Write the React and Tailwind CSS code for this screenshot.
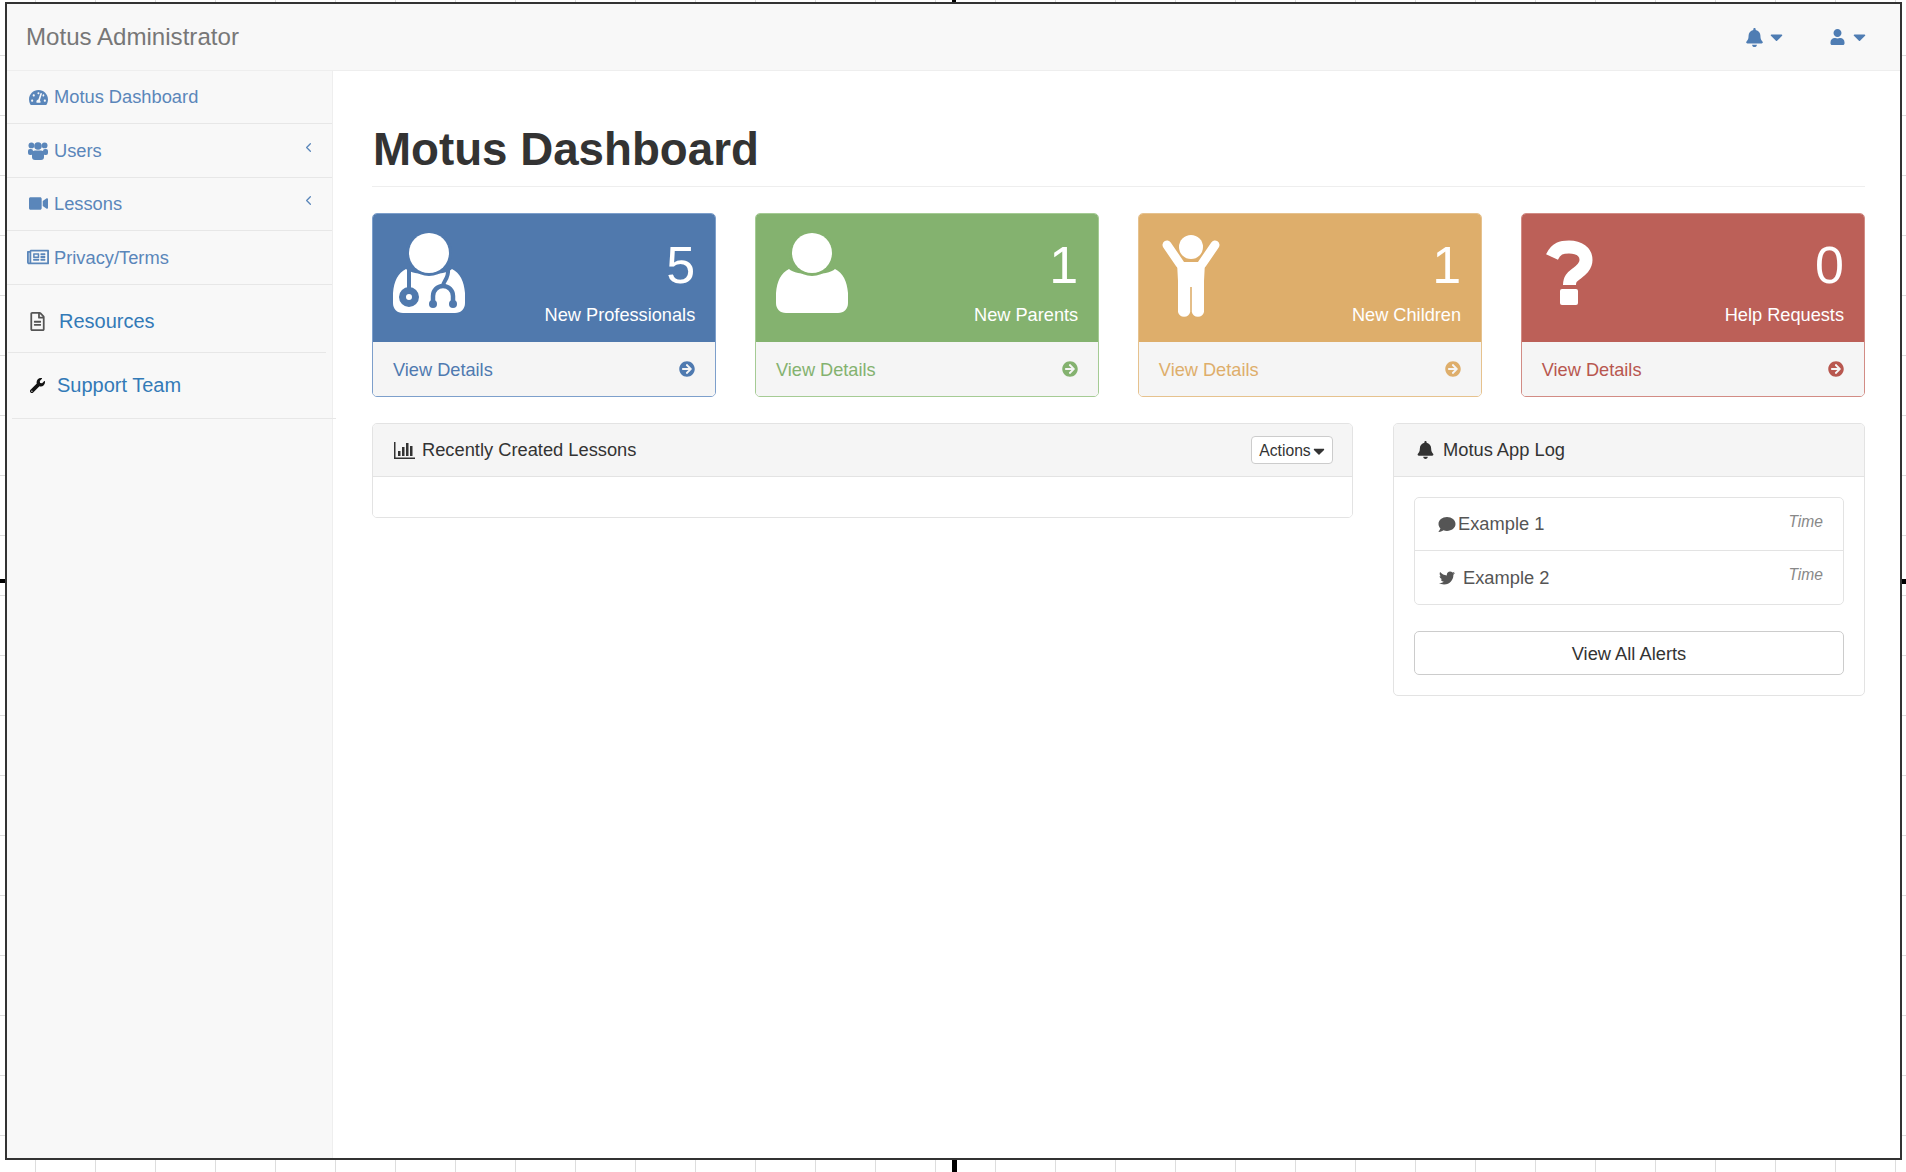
import React from "react";
import { ChevronLeft } from "lucide-react";
import {
  FaTachometerAlt,
  FaVideo,
  FaRegNewspaper,
  FaRegFileAlt,
  FaWrench,
  FaBell,
  FaUser,
  FaCaretDown,
  FaArrowCircleRight,
  FaComment,
  FaTwitter,
} from "react-icons/fa";

const BodyShape = () => (
  <path d="M13 36 C5 40 1 48 0 60 L0 70 C0 76 4 80 10 80 L62 80 C68 80 72 76 72 70 L72 60 C71 48 67 40 59 36 C52 43 20 43 13 36 Z" fill="white" />
);

const DoctorIcon = () => (
  <svg width="72" height="80" viewBox="0 0 72 80">
    <BodyShape />
    <circle cx="36" cy="20" r="23" fill="#5079ad" />
    <circle cx="36" cy="20" r="20" fill="white" />
    <path d="M16 36 L16 56" stroke="#5079ad" strokeWidth="4" fill="none" />
    <circle cx="16" cy="64" r="6.5" fill="white" stroke="#5079ad" strokeWidth="7" />
    <path d="M55 36 C56 46 50 48 50 53" stroke="#5079ad" strokeWidth="4" fill="none" />
    <path d="M40 70 L40 63 A10 10 0 0 1 60 63 L60 70" stroke="#5079ad" strokeWidth="4.5" fill="none" />
    <circle cx="40" cy="71" r="4" fill="#5079ad" />
    <circle cx="60" cy="71" r="4" fill="#5079ad" />
  </svg>
);

const ParentIcon = () => (
  <svg width="72" height="80" viewBox="0 0 72 80">
    <BodyShape />
    <circle cx="36" cy="20" r="23" fill="#84b26f" />
    <ellipse cx="36" cy="20" rx="20" ry="20" fill="white" />
  </svg>
);

const ChildIcon = () => (
  <svg width="58" height="84" viewBox="0 0 58 84">
    <circle cx="29" cy="12" r="12" fill="white" />
    <path d="M5 10 L18 29 M53 10 L40 29" stroke="white" strokeWidth="9" strokeLinecap="round" fill="none" />
    <path d="M15 27 L43 27 L42 46 L42 77 A6.3 6.3 0 0 1 29.8 77 L29.8 52 L28.2 52 L28.2 77 A6.3 6.3 0 0 1 16 77 L16 46 Z" fill="white" />
  </svg>
);

const QuestionIcon = () => (
  <svg width="47" height="65" viewBox="0 0 47 65">
    <path d="M6 17 C10 8 16 7 23 7 C33 7 40 12 40 20 C40 27 34 31 30 34 C26 37 23.5 39 23.5 45" stroke="white" strokeWidth="13" fill="none" />
    <rect x="14" y="49" width="18" height="16" rx="2" fill="white" />
  </svg>
);

const UsersIcon = () => (
  <svg width="20" height="18" viewBox="0 0 20 18" fill="currentColor">
    <circle cx="3.4" cy="3.4" r="2.9" />
    <circle cx="16.6" cy="3.4" r="2.9" />
    <circle cx="10" cy="4" r="3.8" />
    <rect x="0" y="7" width="5" height="6" rx="2" />
    <rect x="15" y="7" width="5" height="6" rx="2" />
    <rect x="4" y="8.5" width="12" height="9.5" rx="3" />
  </svg>
);

const BarsIcon = () => (
  <svg width="21" height="17" viewBox="0 0 21 17" fill="#333">
    <rect x="0" y="0" width="1.5" height="17" />
    <rect x="0" y="15.5" width="21" height="1.5" />
    <rect x="4" y="9" width="2.5" height="5" />
    <rect x="8" y="5" width="2.5" height="9" />
    <rect x="12" y="1" width="2.5" height="13" />
    <rect x="16" y="4" width="2.5" height="10" />
  </svg>
);

const stats = [
  { count: "5", label: "New Professionals", icon: <DoctorIcon />, pad: "pl-[20px] pt-[19px]", head: "bg-[#5079ad]", border: "border-[#7d9fcb]", text: "text-[#4f7ab0]" },
  { count: "1", label: "New Parents", icon: <ParentIcon />, pad: "pl-[20px] pt-[19px]", head: "bg-[#84b26f]", border: "border-[#a5cb94]", text: "text-[#84b26f]" },
  { count: "1", label: "New Children", icon: <ChildIcon />, pad: "pl-[23px] pt-[21px]", head: "bg-[#deae6b]", border: "border-[#e6c28e]", text: "text-[#deae6b]" },
  { count: "0", label: "Help Requests", icon: <QuestionIcon />, pad: "pl-[24px] pt-[26px]", head: "bg-[#bc6058]", border: "border-[#d28c85]", text: "text-[#b8574f]" },
];

const StatCard = ({ stat }) => (
  <div className={`h-[184px] rounded-[5px] border-[1.5px] overflow-hidden ${stat.border}`}>
    <div className={`h-[128px] flex justify-between pr-[20px] ${stat.head}`}>
      <div className={stat.pad}>{stat.icon}</div>
      <div className="text-right text-white">
        <div className="mt-[25px] text-[52px] leading-[52px]">{stat.count}</div>
        <div className="mt-[12px] text-[18.2px] leading-[24px]">{stat.label}</div>
      </div>
    </div>
    <div className={`h-[54px] bg-[#f5f5f5] flex items-center justify-between pl-[20px] pr-[20px] text-[18.2px] ${stat.text}`}>
      <span className="pt-[3px]">View Details</span>
      <FaArrowCircleRight className="w-[16px] h-[16px]" />
    </div>
  </div>
);

const SideItem = ({ icon, label, arrow }) => (
  <div className="h-[53.4px] flex items-center border-b-[1.5px] border-[#e7e7e7] pl-[20px] pr-[16px] text-[18.3px] text-[#5a86ba]">
    <span className="w-[27px] flex justify-center pr-[5px]">{icon}</span>
    <span className="flex-1">{label}</span>
    {arrow && <ChevronLeft className="w-[15px] h-[15px] mb-[6px]" />}
  </div>
);

// ruler marks around the captured window
const ticksX = Array.from({ length: 32 }, (_, i) => 35 + i * 60);
const ticksY = Array.from({ length: 19 }, (_, i) => 55 + i * 60);

const App = () => {
  return (
    <div className="relative w-[1906px] h-[1172px] overflow-hidden bg-white font-['Liberation_Sans',Arial,sans-serif] text-[#333]">
      {ticksX.map((x) => (
        <React.Fragment key={x}>
          <div className="absolute top-0 w-px h-[2px] bg-[#dddddd]" style={{ left: x }} />
          <div className="absolute top-[1160px] w-px h-[12px] bg-[#dddddd]" style={{ left: x }} />
        </React.Fragment>
      ))}
      {ticksY.map((y) => (
        <React.Fragment key={y}>
          <div className="absolute left-0 h-px w-[5px] bg-[#dddddd]" style={{ top: y }} />
          <div className="absolute left-[1902px] h-px w-[4px] bg-[#dddddd]" style={{ top: y }} />
        </React.Fragment>
      ))}
      <div className="absolute left-[952px] top-0 w-[4px] h-[3px] bg-black" />
      <div className="absolute left-[952px] top-[1160px] w-[5px] h-[12px] bg-black" />
      <div className="absolute left-0 top-[579px] w-[5px] h-[4px] bg-black" />
      <div className="absolute left-[1902px] top-[579px] w-[4px] h-[5px] bg-black" />

      <div className="absolute left-[5px] top-[2px] w-[1897px] h-[1158px] border-2 border-[#333] flex flex-col">
        <nav className="h-[67px] shrink-0 bg-[#f8f8f8] border-b-[1.5px] border-[#eeeeee] flex items-center pl-[19px]">
          <span className="flex-1 text-[24.1px] text-[#777777]">Motus Administrator</span>
          <div className="flex items-center text-[#4f7db3]">
            <FaBell className="w-[17px] h-[19px]" />
            <FaCaretDown className="w-[13px] h-[20px] ml-[7px]" />
          </div>
          <div className="flex items-center text-[#4f7db3] mr-[34px] ml-[47px]">
            <FaUser className="w-[15px] h-[16px]" />
            <FaCaretDown className="w-[13px] h-[20px] ml-[8px]" />
          </div>
        </nav>

        <div className="flex flex-1 min-h-0">
          <aside className="w-[326px] shrink-0 bg-[#f8f8f8] border-r-[1.5px] border-[#eeeeee]">
            <SideItem icon={<FaTachometerAlt className="w-[19px] h-[17px]" />} label="Motus Dashboard" />
            <SideItem icon={<UsersIcon />} label="Users" arrow />
            <SideItem icon={<FaVideo className="w-[19px] h-[17px]" />} label="Lessons" arrow />
            <SideItem icon={<FaRegNewspaper className="w-[22px] h-[20px]" />} label="Privacy/Terms" />
            <div className="w-[318px] ml-px h-[68px] pt-[6px] flex items-center border-b-[1.5px] border-[#e7e7e7] pl-[22px] text-[20px] text-[#337ab7]">
              <FaRegFileAlt className="w-[15px] h-[19px] text-[#555]" />
              <span className="ml-[14px]">Resources</span>
            </div>
            <div className="w-[324px] ml-[5px] h-[66px] flex items-center border-b-[1.5px] border-[#e7e7e7] pl-[18px] text-[20px] text-[#337ab7]">
              <FaWrench className="w-[15px] h-[15px] text-[#111]" />
              <span className="ml-[12px]">Support Team</span>
            </div>
          </aside>

          <main className="flex-1 pl-[39px] pr-[35px]">
            <div className="pt-[51px] pb-[9px] mb-[26px] border-b-[1.5px] border-[#eeeeee]">
              <h1 className="pl-px text-[45.7px] leading-[55px] font-bold">Motus Dashboard</h1>
            </div>

            <div className="grid grid-cols-4 gap-x-[38.7px]">
              {stats.map((s) => (
                <StatCard key={s.label} stat={s} />
              ))}
            </div>

            <div className="grid grid-cols-[981px_472px] gap-x-[40px] mt-[26px] items-start">
              <section className="border-[1.5px] border-[#e3e3e3] rounded-[5px] overflow-hidden">
                <div className="h-[53px] bg-[#f5f5f5] border-b-[1.5px] border-[#e3e3e3] flex items-center pl-[21px] pr-[19px] text-[18.3px]">
                  <BarsIcon />
                  <span className="ml-[7px] flex-1">Recently Created Lessons</span>
                  <button className="w-[82px] h-[28px] bg-white border-[1.5px] border-[#cccccc] rounded-[4px] flex items-center justify-center text-[15.7px]">
                    <span className="pt-[2px]">Actions</span>
                    <FaCaretDown className="w-[12px] h-[18px] ml-[2px] mt-[2px]" />
                  </button>
                </div>
                <div className="h-[40px] bg-white" />
              </section>

              <section className="border-[1.5px] border-[#e3e3e3] rounded-[5px] overflow-hidden">
                <div className="h-[53px] bg-[#f5f5f5] border-b-[1.5px] border-[#e3e3e3] flex items-center pl-[23px] text-[18.3px]">
                  <FaBell className="w-[17px] h-[18px]" />
                  <span className="ml-[9px]">Motus App Log</span>
                </div>
                <div className="px-[20px] pt-[20px] pb-[20px]">
                  <div className="border-[1.5px] border-[#e3e3e3] rounded-[5px] text-[18.3px] text-[#555]">
                    <div className="h-[53px] flex items-center border-b-[1.5px] border-[#e3e3e3] pl-[22px] pr-[20px]">
                      <FaComment className="w-[20px] h-[17px] text-[#555]" />
                      <span className="ml-px flex-1">Example 1</span>
                      <em className="text-[15.6px] text-[#888] mb-[5px]">Time</em>
                    </div>
                    <div className="h-[53px] flex items-center pl-[24px] pr-[20px]">
                      <FaTwitter className="w-[16px] h-[16px] text-[#555]" />
                      <span className="ml-[8px] flex-1">Example 2</span>
                      <em className="text-[15.6px] text-[#888] mb-[5px]">Time</em>
                    </div>
                  </div>
                  <button className="w-full h-[44px] mt-[26px] pt-px border-[1.5px] border-[#cccccc] rounded-[5px] text-[18.3px] text-[#333] bg-white">
                    View All Alerts
                  </button>
                </div>
              </section>
            </div>
          </main>
        </div>
      </div>
    </div>
  );
};

export default App;
